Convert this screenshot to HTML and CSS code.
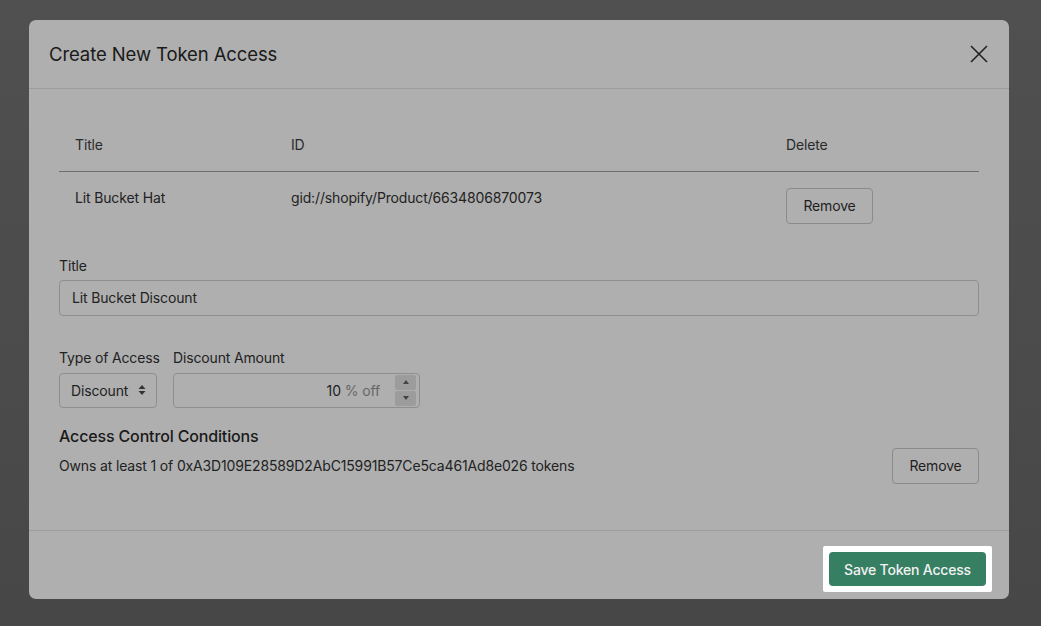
FILE: index.html
```html
<!DOCTYPE html>
<html>
<head>
<meta charset="utf-8">
<link rel="stylesheet" href="styles.css">
</head>
<body>
<div class="overlay">
  <div class="modal">
    <div class="modal-header">
      <h2 class="modal-title">Create New Token Access</h2>
      <button class="close-btn" aria-label="Close">
        <svg width="18" height="18" viewBox="0 0 18 18"><path d="M1 1 L17 17 M17 1 L1 17" stroke="#222" stroke-width="1.6" fill="none"/></svg>
      </button>
    </div>
    <div class="modal-body">
      <table class="products">
        <thead>
          <tr><th class="c1">Title</th><th class="c2">ID</th><th class="c3">Delete</th></tr>
        </thead>
        <tbody>
          <tr>
            <td class="c1">Lit Bucket Hat</td>
            <td class="c2">gid://shopify/Product/6634806870073</td>
            <td class="c3"><button class="btn">Remove</button></td>
          </tr>
        </tbody>
      </table>

      <div class="field title-field">
        <label class="label">Title</label>
        <div class="text-input">Lit Bucket Discount</div>
      </div>

      <div class="field-row">
        <div class="field type-field">
          <label class="label">Type of Access</label>
          <div class="select">Discount
            <svg width="8" height="12" viewBox="0 0 8 12"><path d="M4 1 L7.5 5 L0.5 5 Z M4 11 L7.5 7 L0.5 7 Z" fill="#333"/></svg>
          </div>
        </div>
        <div class="field">
          <label class="label">Discount Amount</label>
          <div class="number-input">
            <span class="num">10</span><span class="suffix">% off</span>
            <div class="stepper">
              <span class="step"><svg width="6" height="4" viewBox="0 0 6 4"><path d="M3 0 L6 4 L0 4 Z" fill="#444"/></svg></span>
              <span class="step"><svg width="6" height="4" viewBox="0 0 6 4"><path d="M0 0 L6 0 L3 4 Z" fill="#444"/></svg></span>
            </div>
          </div>
        </div>
      </div>

      <h3 class="section-title">Access Control Conditions</h3>
      <div class="condition">
        <span>Owns at least 1 of 0xA3D109E28589D2AbC15991B57Ce5ca461Ad8e026 tokens</span>
        <button class="btn">Remove</button>
      </div>
    </div>
    <div class="modal-footer">
      <div class="spotlight"><button class="btn-primary">Save Token Access</button></div>
    </div>
  </div>
</div>
</body>
</html>
```
FILE: styles.css
```css
* { box-sizing: border-box; }
html, body { margin: 0; padding: 0; }
body {
  width: 1041px;
  height: 626px;
  overflow: hidden;
  background: linear-gradient(#505050, #474747);
  font-family: Inter, "Liberation Sans", Arial, sans-serif;
  color: #1e1e1e;
  font-size: 14px;
  letter-spacing: -0.15px;
}
.overlay { padding: 20px 0 0 29px; }
.modal {
  width: 980px;
  height: 579px;
  background: #afafaf;
  border-radius: 7px;
  display: flex;
  flex-direction: column;
}
.modal-header {
  height: 69px;
  padding: 0 20px;
  display: flex;
  align-items: center;
  justify-content: space-between;
  border-bottom: 1px solid #9c9c9c;
}
.modal-title {
  margin: 0;
  font-size: 18.5px;
  font-weight: 400;
  letter-spacing: -0.1px;
  color: #1a1a1a;
}
.close-btn {
  background: none;
  border: 0;
  padding: 0;
  width: 18px;
  height: 18px;
  margin-right: 1px;
  display: flex;
}
.modal-body {
  flex: 1;
  padding: 30px 30px 0 30px;
}
.products {
  width: 920px;
  border-collapse: collapse;
  table-layout: fixed;
}
.products th {
  height: 52px;
  font-weight: 400;
  text-align: left;
  padding: 0 16px;
  border-bottom: 1px solid #6e6e6e;
  color: #2a2a2a;
}
.products td {
  vertical-align: top;
  padding: 16px;
  line-height: 20px;
  color: #222;
}
.c1 { width: 216px; }
.c2 { width: 495px; }
.btn {
  font-family: inherit;
  font-size: 14px;
  letter-spacing: -0.15px;
  color: #1e1e1e;
  background: transparent;
  border: 1px solid #8b8b8b;
  border-radius: 4px;
  width: 87px;
  height: 36px;
  padding: 0;
}
.field { display: flex; flex-direction: column; }
.title-field { margin-top: 16px; }
.label {
  line-height: 20px;
  margin-bottom: 4px;
  color: #222;
  white-space: nowrap;
}
.text-input {
  height: 36px;
  border: 1px solid #8e8e8e;
  border-radius: 4px;
  padding: 0 12px;
  display: flex;
  align-items: center;
  color: #222;
}
.field-row {
  display: flex;
  gap: 16px;
  margin-top: 32px;
}
.type-field { width: 98px; }
.field-row .label { margin-bottom: 5px; }
.select {
  width: 98px;
  height: 35px;
  border: 1px solid #8e8e8e;
  border-radius: 4px;
  padding: 0 10px 0 11px;
  display: flex;
  align-items: center;
  justify-content: space-between;
  color: #222;
}
.number-input {
  width: 247px;
  height: 35px;
  border: 1px solid #8e8e8e;
  border-radius: 4px;
  display: flex;
  align-items: center;
  justify-content: flex-end;
  padding-right: 3px;
}
.num { color: #222; }
.suffix { color: #666; margin-left: 4px; margin-right: 15px; }
.stepper { display: flex; flex-direction: column; gap: 1px; }
.step {
  width: 21px;
  height: 15px;
  background: #9c9c9c;
  border-radius: 2px;
  display: flex;
  align-items: center;
  justify-content: center;
}
.section-title {
  margin: 17px 0 1px 0;
  font-size: 16px;
  font-weight: 500;
  line-height: 22px;
  color: #1a1a1a;
}
.condition {
  display: flex;
  align-items: center;
  justify-content: space-between;
  color: #222;
}
.modal-footer {
  border-top: 1px solid #9c9c9c;
  padding: 15px 17px 7px 0;
  display: flex;
  justify-content: flex-end;
}
.spotlight {
  background: #ffffff;
  padding: 6px;
  border-radius: 2px;
}
.btn-primary {
  display: block;
  font-family: inherit;
  font-size: 14px;
  font-weight: 500;
  letter-spacing: -0.2px;
  color: #f2f2f2;
  background: #367f62;
  border: 0;
  border-radius: 4px;
  width: 157px;
  height: 34px;
  padding: 0;
}
```
